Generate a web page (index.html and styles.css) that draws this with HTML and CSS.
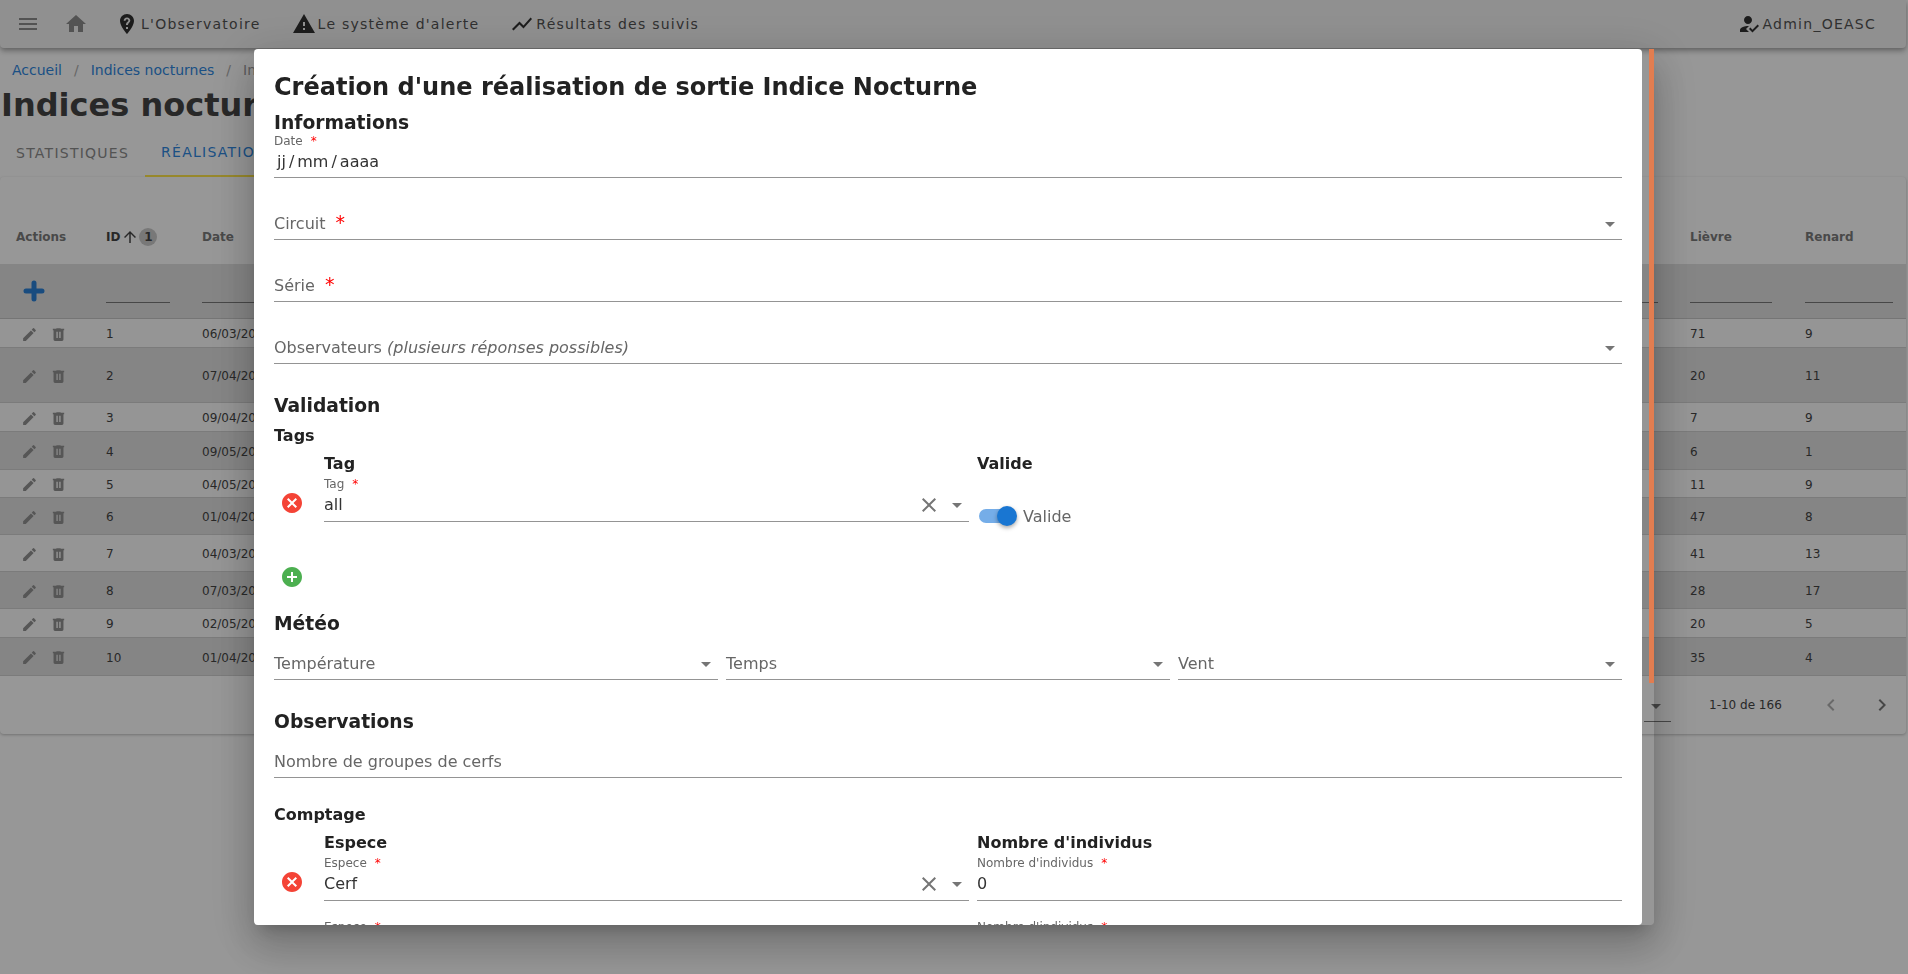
FILE: index.html
```html
<!DOCTYPE html>
<html lang="fr">
<head>
  <meta charset="UTF-8" />
  <meta name="viewport" content="width=device-width, initial-scale=1.0" />
  <title>Indices nocturnes</title>
  <link rel="stylesheet" href="styles.css">
</head>
<body>
  <div class="page">
    <header class="appbar">
      <svg class="ico ico-menu" viewBox="0 0 24 24"><path d="M3 18h18v-2H3v2zm0-5h18v-2H3v2zm0-7v2h18V6H3z"/></svg>
      <svg class="ico ico-home" viewBox="0 0 24 24"><path d="M10 20v-6h4v6h5v-8h3L12 3 2 12h3v8z"/></svg>
      <a class="nav nav-obs">
        <svg class="ico" viewBox="0 0 24 24"><path d="M12 2c3.86 0 7 3.14 7 7 0 5.25-7 13-7 13S5 14.25 5 9c0-3.86 3.14-7 7-7zm-1 13v2h2v-2h-2zm1-9.5C10 5.500 8.700 7 8.700 8.700h1.900c0-.8.600-1.400 1.400-1.400s1.400.6 1.400 1.300c0 1.400-2.400 1.500-2.400 4.400h1.900c0-2 2.400-2.400 2.400-4.500C15.300 7 14 5.500 12 5.500z" fill-rule="evenodd"/></svg>
        L'Observatoire
      </a>
      <a class="nav nav-alert">
        <svg class="ico" viewBox="0 0 24 24"><path d="M1 21h22L12 2 1 21zm12-3h-2v-2h2v2zm0-4h-2v-4h2v4z"/></svg>
        Le système d'alerte
      </a>
      <a class="nav nav-res">
        <svg class="ico" viewBox="0 0 24 24"><path d="M3.500 18.500l6-6 4 4L22 6.920 20.590 5.500l-7.090 8-4-4L2 17z"/></svg>
        Résultats des suivis
      </a>
      <a class="nav nav-user">
        <svg class="ico" viewBox="0 0 24 24"><path d="M9 17l3-2.940c-.390-.040-.680-.060-1-.060-2.670 0-8 1.340-8 4v2h9l-3-3zm2-5c2.210 0 4-1.790 4-4s-1.790-4-4-4-4 1.790-4 4 1.790 4 4 4m4.470 8.500L12 17l1.400-1.410 2.070 2.080 5.130-5.170 1.400 1.410z"/></svg>
        Admin_OEASC
      </a>
    </header>

    <nav class="crumbs">
      <a>Accueil</a><span class="sep">/</span><a>Indices nocturnes</a><span class="sep">/</span><span class="cur">Indice Nocturne</span>
    </nav>
    <h1 class="page-title">Indices nocturnes</h1>

    <div class="tabs">
      <span class="tab">STATISTIQUES</span>
      <span class="tab tab-on">RÉALISATIONS</span>
    </div>

    <section class="card">
      <div class="tr thead">
        <span>Actions</span>
        <span class="sort">ID<svg class="ico" viewBox="0 0 24 24"><path d="M4 12l1.410 1.410L11 7.830V20h2V7.830l5.580 5.590L20 12l-8-8-8 8z"/></svg><i class="badge">1</i></span>
        <span>Date</span>
        <span></span>
        <span>Lièvre</span>
        <span>Renard</span>
      </div>
      <div class="tr tfilter">
        <svg class="plus" viewBox="0 0 24 24"><path d="M12 4v16M4 12h16"/></svg>
        <i class="flt flt-id"></i>
        <i class="flt flt-date"></i>
        <i class="flt flt-mid"></i>
        <i class="flt flt-l"></i>
        <i class="flt flt-r"></i>
      </div>

      <div class="tr row h29"><span class="acts"><svg class="ico" viewBox="0 0 24 24"><use href="#edit"/></svg><svg class="ico" viewBox="0 0 24 24"><use href="#trash"/></svg></span><span>1</span><span>06/03/2021</span><span></span><span>71</span><span>9</span></div>
      <div class="tr row alt h55"><span class="acts"><svg class="ico" viewBox="0 0 24 24"><use href="#edit"/></svg><svg class="ico" viewBox="0 0 24 24"><use href="#trash"/></svg></span><span>2</span><span>07/04/2021</span><span></span><span>20</span><span>11</span></div>
      <div class="tr row h29"><span class="acts"><svg class="ico" viewBox="0 0 24 24"><use href="#edit"/></svg><svg class="ico" viewBox="0 0 24 24"><use href="#trash"/></svg></span><span>3</span><span>09/04/2021</span><span></span><span>7</span><span>9</span></div>
      <div class="tr row alt h38"><span class="acts"><svg class="ico" viewBox="0 0 24 24"><use href="#edit"/></svg><svg class="ico" viewBox="0 0 24 24"><use href="#trash"/></svg></span><span>4</span><span>09/05/2021</span><span></span><span>6</span><span>1</span></div>
      <div class="tr row h28"><span class="acts"><svg class="ico" viewBox="0 0 24 24"><use href="#edit"/></svg><svg class="ico" viewBox="0 0 24 24"><use href="#trash"/></svg></span><span>5</span><span>04/05/2021</span><span></span><span>11</span><span>9</span></div>
      <div class="tr row alt h37"><span class="acts"><svg class="ico" viewBox="0 0 24 24"><use href="#edit"/></svg><svg class="ico" viewBox="0 0 24 24"><use href="#trash"/></svg></span><span>6</span><span>01/04/2021</span><span></span><span>47</span><span>8</span></div>
      <div class="tr row h37"><span class="acts"><svg class="ico" viewBox="0 0 24 24"><use href="#edit"/></svg><svg class="ico" viewBox="0 0 24 24"><use href="#trash"/></svg></span><span>7</span><span>04/03/2021</span><span></span><span>41</span><span>13</span></div>
      <div class="tr row alt h37"><span class="acts"><svg class="ico" viewBox="0 0 24 24"><use href="#edit"/></svg><svg class="ico" viewBox="0 0 24 24"><use href="#trash"/></svg></span><span>8</span><span>07/03/2021</span><span></span><span>28</span><span>17</span></div>
      <div class="tr row h29"><span class="acts"><svg class="ico" viewBox="0 0 24 24"><use href="#edit"/></svg><svg class="ico" viewBox="0 0 24 24"><use href="#trash"/></svg></span><span>9</span><span>02/05/2021</span><span></span><span>20</span><span>5</span></div>
      <div class="tr row alt h38"><span class="acts"><svg class="ico" viewBox="0 0 24 24"><use href="#edit"/></svg><svg class="ico" viewBox="0 0 24 24"><use href="#trash"/></svg></span><span>10</span><span>01/04/2021</span><span></span><span>35</span><span>4</span></div>

      <div class="tfoot">
        <span class="perpage"><svg class="ico" viewBox="0 0 24 24"><path d="M7 10l5 5 5-5z"/></svg></span>
        <span class="count">1-10 de 166</span>
        <svg class="ico pg pg-off" viewBox="0 0 24 24"><path d="M15.410 7.410 14 6l-6 6 6 6 1.410-1.410L10.830 12z"/></svg>
        <svg class="ico pg" viewBox="0 0 24 24"><path d="M10 6 8.590 7.410 13.170 12l-4.580 4.590L10 18l6-6z"/></svg>
      </div>
    </section>
  </div>

  <svg class="defs" aria-hidden="true">
    <symbol id="edit" viewBox="0 0 24 24"><path d="M3 17.250V21h3.750L17.810 9.940l-3.750-3.750L3 17.250zM20.710 7.040c.390-.390.390-1.020 0-1.410l-2.340-2.340a.996.996 0 0 0-1.410 0l-1.830 1.830 3.750 3.750 1.830-1.830z"/></symbol>
    <symbol id="trash" viewBox="0 0 24 24"><path d="M9 3v1H4v2h1v13a2 2 0 0 0 2 2h10a2 2 0 0 0 2-2V6h1V4h-5V3H9zm0 5h2v9H9V8zm4 0h2v9h-2V8z"/></symbol>
    <symbol id="cancel" viewBox="0 0 24 24"><path d="M12 2C6.470 2 2 6.470 2 12s4.470 10 10 10 10-4.470 10-10S17.530 2 12 2zm5 13.590L15.590 17 12 13.410 8.410 17 7 15.590 10.590 12 7 8.410 8.410 7 12 10.590 15.590 7 17 8.410 13.410 12 17 15.590z"/></symbol>
    <symbol id="drop" viewBox="0 0 24 24"><path d="M7 10l5 5 5-5z"/></symbol>
    <symbol id="close" viewBox="0 0 24 24"><path d="M19 6.410 17.590 5 12 10.590 6.410 5 5 6.410 10.590 12 5 17.590 6.410 19 12 13.410 17.590 19 19 17.590 13.410 12z"/></symbol>
  </svg>

  <div class="overlay"></div>

  <div class="dialog">
    <div class="dialog-body">
      <h2 class="dialog-title">Création d'une réalisation de sortie Indice Nocturne</h2>

      <h3 class="sec sec-first">Informations</h3>
      <div class="field filled">
        <label>Date<b class="req">*</b></label>
        <div class="value date-value"><span>jj</span><span>/</span><span>mm</span><span>/</span><span>aaaa</span></div>
      </div>
      <div class="field gap"><span class="ph">Circuit<b class="req">*</b></span><svg class="ico drop"><use href="#drop"/></svg></div>
      <div class="field gap"><span class="ph">Série<b class="req">*</b></span></div>
      <div class="field gap"><span class="ph">Observateurs <em>(plusieurs réponses possibles)</em></span><svg class="ico drop"><use href="#drop"/></svg></div>

      <h3 class="sec">Validation</h3>
      <h4 class="sub">Tags</h4>
      <div class="list">
        <svg class="ico del"><use href="#cancel"/></svg>
        <div>
          <div class="col-head">Tag</div>
          <div class="field filled in-list">
            <label>Tag<b class="req">*</b></label>
            <div class="value">all<svg class="ico clear"><use href="#close"/></svg><svg class="ico drop"><use href="#drop"/></svg></div>
          </div>
        </div>
        <div>
          <div class="col-head">Valide</div>
          <div class="switch-line">
            <span class="switch"><i class="thumb"></i></span>
            <span class="ph">Valide</span>
          </div>
        </div>
      </div>
      <svg class="add" viewBox="0 0 24 24"><path d="M12 2C6.480 2 2 6.480 2 12s4.480 10 10 10 10-4.480 10-10S17.520 2 12 2zm5 11h-4v4h-2v-4H7v-2h4V7h2v4h4v2z"/></svg>

      <h3 class="sec sec-meteo">Météo</h3>
      <div class="three">
        <div class="field"><span class="ph">Température</span><svg class="ico drop"><use href="#drop"/></svg></div>
        <div class="field"><span class="ph">Temps</span><svg class="ico drop"><use href="#drop"/></svg></div>
        <div class="field"><span class="ph">Vent</span><svg class="ico drop"><use href="#drop"/></svg></div>
      </div>

      <h3 class="sec">Observations</h3>
      <div class="field"><span class="ph">Nombre de groupes de cerfs</span></div>

      <h4 class="sub sub-comptage">Comptage</h4>
      <div class="list">
        <svg class="ico del"><use href="#cancel"/></svg>
        <div>
          <div class="col-head">Espece</div>
          <div class="field filled in-list">
            <label>Espece<b class="req">*</b></label>
            <div class="value">Cerf<svg class="ico clear"><use href="#close"/></svg><svg class="ico drop"><use href="#drop"/></svg></div>
          </div>
        </div>
        <div>
          <div class="col-head">Nombre d'individus</div>
          <div class="field filled in-list">
            <label>Nombre d'individus<b class="req">*</b></label>
            <div class="value">0</div>
          </div>
        </div>
      </div>
      <div class="list list-next">
        <svg class="ico del"><use href="#cancel"/></svg>
        <div class="field filled in-list">
          <label>Espece<b class="req">*</b></label>
        </div>
        <div class="field filled in-list">
          <label>Nombre d'individus<b class="req">*</b></label>
        </div>
      </div>
    </div>
    <div class="scroll-thumb"></div>
  </div>
</body>
</html>
```

FILE: styles.css
```css
* {
  box-sizing: border-box;
}
html, body {
  margin: 0;
  height: 100%;
  overflow: hidden;
}
body {
  font-family: "DejaVu Sans", sans-serif;
  background-color: #fcfcfc;
  color: #222;
}
.ico {
  display: block;
  width: 24px;
  height: 24px;
  fill: currentColor;
  flex: none;
}
.defs {
  display: none;
}

/* page behind the dialog */
.page {
  width: 1906px;
}
.appbar {
  display: flex;
  align-items: center;
  height: 48px;
  background: #f0f0f0;
  color: #8a8a8a;
  border-radius: 0 0 4px 4px;
  box-shadow: 0 2px 4px -1px rgba(0,0,0,.2), 0 4px 5px rgba(0,0,0,.14), 0 1px 10px rgba(0,0,0,.12);
}
.ico-menu {
  margin-left: 16px;
}
.ico-home {
  margin-left: 24px;
}
.nav {
  display: flex;
  align-items: center;
  font-size: 14px;
  letter-spacing: 1.25px;
  color: #505050;
}
.nav .ico {
  margin-right: 2px;
  color: #303030;
}
.nav-obs {
  margin-left: 27px;
}
.nav-alert {
  margin-left: 31px;
}
.nav-res {
  margin-left: 31px;
}
.nav-user {
  margin-left: auto;
  margin-right: 30px;
}
.crumbs {
  display: flex;
  height: 22px;
  margin-top: 11px;
  padding-left: 12px;
  font-size: 14px;
  line-height: 22px;
  color: #2f86dc;
  white-space: nowrap;
}
.sep {
  margin: 0 12px;
  color: #aaa;
}
.cur {
  color: #999;
}
.page-title {
  margin: 4px 0 0 1px;
  font-size: 32px;
  line-height: 40px;
  font-weight: bold;
  color: #444;
  white-space: nowrap;
}
.tabs {
  display: flex;
  height: 48px;
  margin-top: 4px;
  font-size: 14px;
  letter-spacing: 1.25px;
}
.tab {
  display: flex;
  align-items: center;
  padding: 0 16px;
  color: #8a8a8a;
}
.tab-on {
  color: #2f86dc;
  border-bottom: 2px solid #fce34a;
}
.card {
  background: #fcfcfc;
  border-radius: 4px;
  box-shadow: 0 1px 3px rgba(0,0,0,.25);
  padding-top: 33px;
  height: 557px;
  font-size: 12px;
}
.tr {
  display: grid;
  grid-template-columns: 106px 96px 80px 1fr 115px 101px;
  align-items: center;
}
.thead {
  height: 54px;
  font-weight: bold;
  color: #7a7a7a;
}
.thead span:first-child {
  padding-left: 16px;
}
.sort {
  display: flex;
  align-items: center;
  color: #444;
}
.sort .ico {
  width: 18px;
  height: 18px;
  margin-left: 1px;
}
.badge {
  width: 18px;
  height: 18px;
  border-radius: 50%;
  background: #c8c8c8;
  font-style: normal;
  text-align: center;
  line-height: 18px;
}
.tfilter {
  height: 55px;
  background: #dedede;
  border-bottom: 1px solid #c4c4c4;
  padding-top: 4px;
}
.plus {
  width: 24px;
  height: 24px;
  margin: 0 0 4px 22px;
  fill: none;
  stroke: #2a7fd4;
  stroke-width: 5;
  stroke-linecap: round;
}
.flt {
  display: block;
  height: 1px;
  margin-top: 18px;
  background: #777;
}
.flt-id {
  width: 64px;
}
.flt-mid {
  margin-right: 32px;
}
.flt-l {
  width: 82px;
}
.flt-r {
  width: 88px;
}
.row {
  color: #444;
  background: #f8f8f8;
  border-bottom: 1px solid #cdcdcd;
  padding-top: 2px;
}
.row.alt {
  background: #dedede;
}
.h28 { height: 28px; }
.h29 { height: 29px; }
.h37 { height: 37px; }
.h38 { height: 38px; }
.h55 { height: 55px; }
.acts {
  display: flex;
  gap: 12px;
  padding-left: 21px;
  color: #909090;
}
.acts .ico {
  width: 17px;
  height: 17px;
}
.tfoot {
  display: flex;
  align-items: center;
  height: 58px;
  color: #444;
  padding-left: 1644px;
}
.perpage {
  width: 27px;
  height: 28px;
  margin-top: 6px;
  border-bottom: 1px solid #777;
  color: #777;
}
.count {
  margin-left: 38px;
  width: 110px;
}
.pg {
  color: #777;
}
.pg-off {
  color: #b0b0b0;
  margin-right: 27px;
}

/* dialog */
.overlay {
  position: fixed;
  inset: 0;
  background: rgba(0,0,0,.4);
}
.dialog {
  position: fixed;
  left: 254px;
  top: 49px;
  width: 1400px;
  height: 876px;
  border-radius: 4px;
  box-shadow: 0 11px 15px -7px rgba(0,0,0,.2), 0 24px 38px 3px rgba(0,0,0,.14), 0 9px 46px 8px rgba(0,0,0,.12);
}
.dialog-body {
  width: 1388px;
  height: 876px;
  overflow: hidden;
  padding: 24px 20px 0;
  background: #fff;
  border-radius: 4px;
}
.scroll-thumb {
  position: absolute;
  top: 0;
  right: 0;
  width: 5px;
  height: 634px;
  background: #e27d50;
}
.dialog-title {
  margin: 0;
  font-size: 24px;
  line-height: 28px;
  color: #222;
}
.sec {
  margin: 31px 0 0;
  font-size: 18.720px;
  line-height: 22px;
  color: #222;
}
.sec-first {
  margin-top: 11px;
  line-height: 21px;
}
.sec-meteo {
  margin-top: 26px;
}
.sub {
  margin: 9px 0 0;
  font-size: 16px;
  line-height: 20px;
}
.sub-comptage {
  margin-top: 27px;
}
.field {
  display: flex;
  align-items: flex-end;
  justify-content: space-between;
  height: 45px;
  padding-bottom: 5px;
  border-bottom: 1px solid #949494;
  font-size: 16px;
  line-height: 20px;
}
.field.gap {
  margin-top: 17px;
}
.field.filled {
  display: block;
  padding-bottom: 0;
}
.field label {
  display: block;
  font-size: 12px;
  line-height: 16px;
  color: #666;
}
.value {
  display: flex;
  align-items: center;
  height: 22px;
  margin-top: 2px;
  color: #333;
}
.date-value {
  gap: 3px;
  padding-left: 3px;
}
.ph {
  color: #666;
}
.ph em {
  font-style: italic;
}
.req {
  margin-left: 8px;
  font-weight: normal;
  color: #f00;
}
.ph .req {
  margin-left: 10px;
  font-size: 19px;
  line-height: 18px;
}
.drop {
  width: 24px;
  height: 24px;
  margin: -2px 0;
  color: #757575;
}
.clear {
  width: 24px;
  height: 24px;
  margin-left: auto;
  margin-right: 4px;
  color: #757575;
}
.list {
  display: grid;
  grid-template-columns: 42px 1fr 1fr;
  column-gap: 8px;
  align-items: end;
}
.list-next {
  margin-top: 16px;
}
.del {
  width: 24px;
  height: 24px;
  margin: 0 0 7px 6px;
  color: #f44336;
}
.col-head {
  margin-top: 8px;
  font-size: 16px;
  line-height: 20px;
  font-weight: bold;
}
.in-list {
  height: 46px;
  margin-top: 2px;
}
.switch-line {
  display: flex;
  align-items: center;
  height: 20px;
  margin: 32px 0 -4px;
  font-size: 16px;
}
.switch {
  position: relative;
  display: block;
  width: 32px;
  height: 14px;
  margin-left: 2px;
  margin-right: 12px;
  border-radius: 7px;
  background: #75ade8;
}
.thumb {
  position: absolute;
  top: -3px;
  right: -6px;
  width: 20px;
  height: 20px;
  border-radius: 50%;
  background: #1976d2;
  box-shadow: 0 2px 4px rgba(0,0,0,.35);
}
.add {
  display: block;
  width: 24px;
  height: 24px;
  margin: 43px 0 -2px 6px;
  fill: #4caf50;
}
.three {
  display: grid;
  grid-template-columns: 1fr 1fr 1fr;
  column-gap: 8px;
}
```
